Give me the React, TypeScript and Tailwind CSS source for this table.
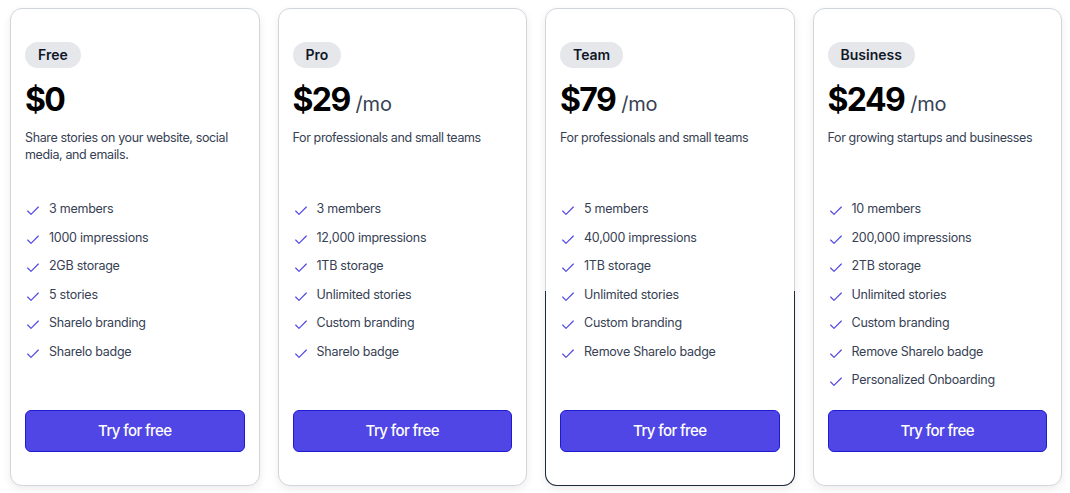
import React from "react";
import { Check } from "lucide-react";

type Plan = {
  name: string;
  price: string;
  perMonth: boolean;
  desc: string;
  features: string[];
  highlighted?: boolean;
};

const plans: Plan[] = [
  {
    name: "Free",
    price: "$0",
    perMonth: false,
    desc: "Share stories on your website, social media, and emails.",
    features: ["3 members", "1000 impressions", "2GB storage", "5 stories", "Sharelo branding", "Sharelo badge"],
  },
  {
    name: "Pro",
    price: "$29",
    perMonth: true,
    desc: "For professionals and small teams",
    features: ["3 members", "12,000 impressions", "1TB storage", "Unlimited stories", "Custom branding", "Sharelo badge"],
  },
  {
    name: "Team",
    price: "$79",
    perMonth: true,
    desc: "For professionals and small teams",
    features: ["5 members", "40,000 impressions", "1TB storage", "Unlimited stories", "Custom branding", "Remove Sharelo badge"],
    highlighted: true,
  },
  {
    name: "Business",
    price: "$249",
    perMonth: true,
    desc: "For growing startups and businesses",
    features: [
      "10 members",
      "200,000 impressions",
      "2TB storage",
      "Unlimited stories",
      "Custom branding",
      "Remove Sharelo badge",
      "Personalized Onboarding",
    ],
  },
];

const PlanCard: React.FC<{ plan: Plan }> = ({ plan }) => (
  <div className="relative flex h-[478px] flex-col rounded-xl border border-gray-300 bg-white px-[14px] pt-[33px] pb-[33px] shadow-[0_3px_8px_rgba(0,0,0,0.08)]">
    {/* dark outline on the lower part of the hovered card */}
    {plan.highlighted && (
      <div className="pointer-events-none absolute -inset-x-px -bottom-px top-[282px] rounded-b-xl border-x border-b border-gray-800" />
    )}

    <span className="self-start rounded-full bg-[#e5e7eb] px-[13px] py-[3px] text-[14px] font-semibold leading-5 text-gray-900">
      {plan.name}
    </span>

    <div className="mt-[12px] flex items-baseline gap-[6px]">
      <span className="text-[32px] font-bold leading-10 tracking-[-0.05em] text-black">{plan.price}</span>
      {plan.perMonth && <span className="text-[20px] tracking-[-0.01em] text-gray-700">/mo</span>}
    </div>

    <p className="mt-[9px] h-[34px] text-[12.5px] leading-[17px] tracking-[-0.03em] text-gray-700">{plan.desc}</p>

    <ul className="mt-[36px] flex flex-col gap-[8.5px]">
      {plan.features.map((f) => (
        <li key={f} className="flex items-center gap-[8px] text-[12.5px] leading-5 tracking-[-0.02em] text-gray-700">
          <Check className="mt-[4px] h-[16px] w-[16px] shrink-0 text-[#4f46e5]" strokeWidth={1.75} />
          <span>{f}</span>
        </li>
      ))}
    </ul>

    <button className="mt-auto flex h-[42px] w-full items-center justify-center rounded-md border border-[#1d1ad0] bg-[#4f46e5] text-[15px] font-medium tracking-[-0.04em] text-white">
      Try for free
    </button>
  </div>
);

export default function App() {
  return (
    <div className="min-h-screen bg-white font-['Inter',_sans-serif]">
      <div className="grid grid-cols-4 gap-[18px] pt-2 pl-[10px] pr-[8px]">
        {plans.map((p) => (
          <PlanCard key={p.name} plan={p} />
        ))}
      </div>
    </div>
  );
}
